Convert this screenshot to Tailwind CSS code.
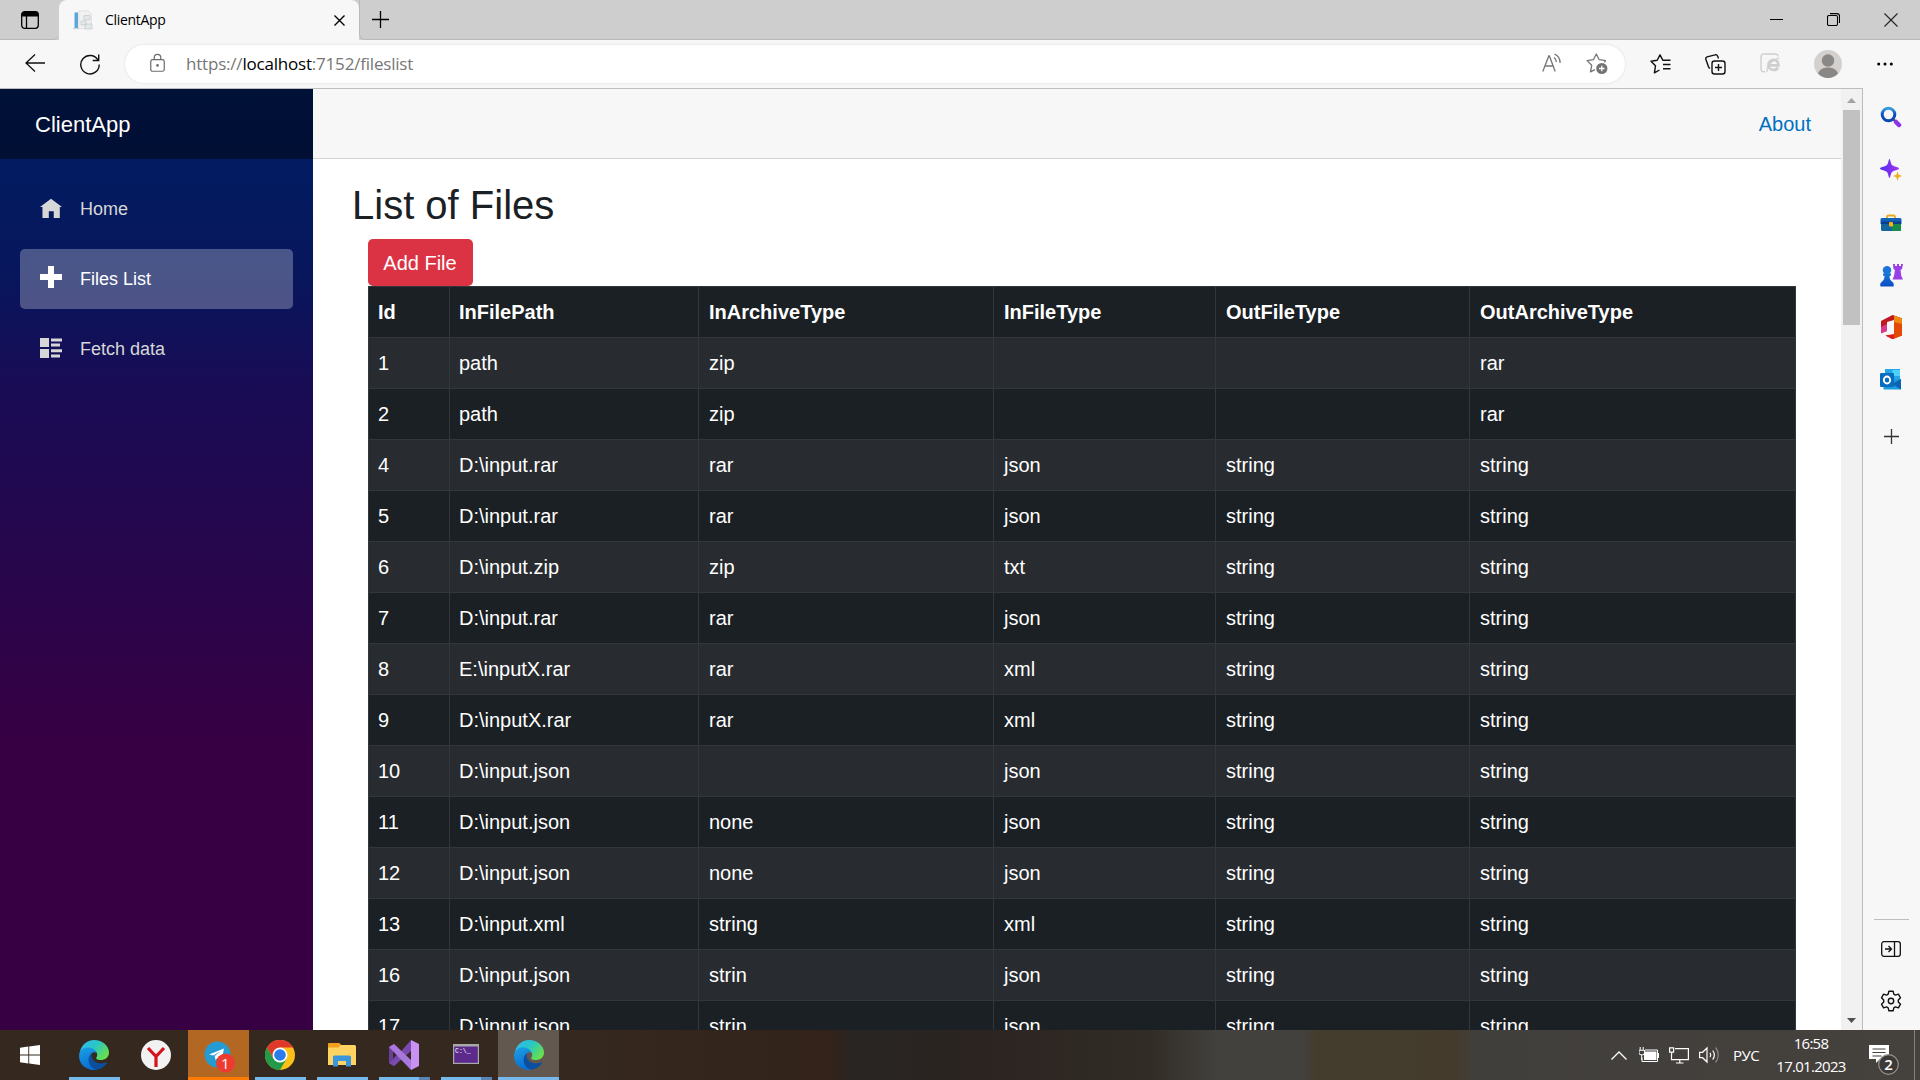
<!DOCTYPE html>
<html lang="en">
<head>
<meta charset="utf-8">
<title>ClientApp</title>
<script src="https://cdn.jsdelivr.net/npm/@tailwindcss/browser@4"></script>
</head>
<body class="w-[1920px] h-[1080px] overflow-hidden flex flex-col bg-[#f7f7f7] font-['Open_Sans',sans-serif] text-black">

<svg class="absolute w-0 h-0">
  <defs>
    <linearGradient id="edgeTop" x1="0" y1="0" x2="1" y2="0.6"><stop offset="0" stop-color="#36b8ee"/><stop offset=".5" stop-color="#27c5c9"/><stop offset="1" stop-color="#66e04e"/></linearGradient>
    <linearGradient id="edgeLeft" x1="0" y1="0" x2=".3" y2="1"><stop offset="0" stop-color="#1ba0e6"/><stop offset="1" stop-color="#0a6fd0"/></linearGradient>
    <linearGradient id="searchRing" x1="0" y1="0" x2="0" y2="1"><stop offset="0" stop-color="#3a9fd8"/><stop offset=".5" stop-color="#0a50c8"/><stop offset="1" stop-color="#0a46b8"/></linearGradient>
    <linearGradient id="spark" x1="0" y1="0" x2="1" y2="0"><stop offset="0" stop-color="#4f2df0"/><stop offset="1" stop-color="#a436f0"/></linearGradient>
    <linearGradient id="pawn" x1="0" y1="0" x2="0" y2="1"><stop offset="0" stop-color="#1976d8"/><stop offset="1" stop-color="#0a4cc4"/></linearGradient>
    <symbol id="edge" viewBox="0 0 30 30">
      <path d="M.8 12.500C2.200 5 8 0 15 0c8.500 0 15 6 15 12.500 0 5-4 7.500-8.500 7.500-3.500 0-5-1.300-4-2.800 1.500-2.200.5-5.200-1.500-6.500C12.500 8.200 5 7.500.8 12.500z" fill="url(#edgeTop)"/>
      <path d="M.1 15.500C.3 10 4.500 7.600 8.500 7.600c4.500 0 8 2 9 5.200C14 11 10.800 14 10.800 18.500c0 5 3.200 9 7.500 11C8 31.800-.4 24.500.1 15.500z" fill="url(#edgeLeft)"/>
      <path d="M13 13.300c-3.500 2.500-4.500 7-2 11.700 2 3.500 5 5 7.500 4.600 4-.8 7.500-3.300 9.500-6.600.3-.6-.1-1-.8-.7-6 2.700-13 .2-14.200-4.800-.4-1.500-.3-3.200 0-4.200z" fill="#0c4f9f"/>
    </symbol>
  </defs>
</svg>

<!-- Tab strip -->
<header class="h-10 shrink-0 flex bg-[#cecece]">
  <div class="w-[59px] flex items-center justify-center border-b border-[#b9b9b9] rounded-br-md">
    <svg class="w-[18px] h-[18px]" viewBox="0 0 18 18" fill="none" stroke="#000"><rect x=".7" y=".7" width="16.600" height="16.600" rx="3" stroke-width="1.300"/><path d="M1 3.500a2.500 2.500 0 0 1 2.500-2.500h11A2.500 2.500 0 0 1 17 3.500V5H1z" fill="#000"/><path d="M5.500 5v12" stroke-width="1.300"/></svg>
  </div>
  <div class="w-[300px] flex items-center bg-[#f7f7f7] rounded-t-lg pl-[14px] pr-[14px]">
    <svg class="w-5 h-5" viewBox="0 0 20 20"><path d="M1.500 2.500h3.500V18H1.500z" fill="#5ba7dc"/><path d="M5.800 1h9.500l3 3v14.500H5.800z" fill="#f1f1f1" stroke="#d8d8d8" stroke-width=".7"/><path d="M11 5.500h6v4.500h-6zM8 11h5v4H8zM12 14h7v5h-7z" fill="#e3e8ea" stroke="#c0c8cc" stroke-width=".7"/><path d="M0 18.700h6" stroke="#c4ccd0"/></svg>
    <span class="ml-3 text-[14px] leading-5 -mt-px tracking-[-0.3px]">ClientApp</span>
    <svg class="ml-auto w-[11px] h-[11px] mt-px" viewBox="0 0 11 11" stroke="#000" stroke-width="1.400"><path d="M.5.5l10 10M10.500.5l-10 10"/></svg>
  </div>
  <div class="flex-1 flex items-center border-b border-l border-[#b9b9b9] rounded-bl-md pl-3">
    <svg class="w-[17px] h-[17px]" viewBox="0 0 17 17" stroke="#000" stroke-width="1.300"><path d="M8.500 0v17M0 8.500h17"/></svg>
    <div class="ml-auto flex items-center gap-[44px] pr-[22px]">
      <svg class="w-[13px] h-[13px]" viewBox="0 0 13 13" stroke="#000"><path d="M0 6.500h13"/></svg>
      <svg class="w-[13px] h-[13px]" viewBox="0 0 13 13" fill="none" stroke="#000" stroke-width="1.100"><rect x=".5" y="2.500" width="10" height="10" rx="1.500"/><path d="M3 .6h7a2.500 2.500 0 0 1 2.500 2.500v7"/></svg>
      <svg class="w-[14px] h-[14px]" viewBox="0 0 14 14" stroke="#222" stroke-width="1.100"><path d="M.5.5l13 13M13.500.5l-13 13"/></svg>
    </div>
  </div>
</header>

<!-- Address toolbar -->
<div class="h-12 shrink-0 flex items-center pl-[25px] pr-[27px]">
  <svg class="w-5 h-[18px] mb-0.5" viewBox="0 0 20 18" fill="none" stroke="#111" stroke-width="1.300"><path d="M20 9H1M10 .5L1 9l9 8.500"/></svg>
  <svg class="ml-[35px] w-5 h-[21px]" viewBox="0 0 20 21" fill="none" stroke="#111" stroke-width="1.400"><path d="M18.200 6.500A9.200 9.200 0 1 0 19.200 10.500M18.700.5v6h-6"/></svg>
  <div class="ml-[25px] w-[1500px] h-[38px] rounded-full bg-white shadow-[0_0_3px_rgba(0,0,0,0.1)] flex items-center pl-[25px] pr-[17px]">
    <svg class="w-[15px] h-[20px] mb-0.5" viewBox="0 0 16 20" fill="none" stroke="#6c6c6c" stroke-width="1.300"><rect x=".8" y="6.500" width="14.400" height="12.300" rx="2"/><path d="M4.500 6.500V4.300a3.500 3.500 0 0 1 7 0v2.200"/><circle cx="8" cy="12.600" r=".8" fill="#6c6c6c"/></svg>
    <span class="ml-[21px] text-[17px] leading-6 text-[#767676] tracking-[-0.2px] whitespace-nowrap">https://<span class="text-black">localhost</span>:7152/fileslist</span>
    <svg class="ml-auto w-5 h-5 mb-0.5" viewBox="0 0 20 20" fill="none" stroke="#767676" stroke-width="1.300"><path d="M.8 18.500L6.800 3h.6l5.800 15.500M3 13h8M12 4.500c1.500 1 2.300 2.600 2.300 4.500M12.500 1.200c3.200 1.300 5.600 4.600 5.600 8.800"/></svg>
    <svg class="ml-[24px] w-[22px] h-[22px]" viewBox="0 0 22 22"><path d="M19.800 7.600l-6.600-.9L10.300 1 7.400 6.700l-6.300.9 4.600 4.700L4.500 18.800l4.500-2.200M19.800 7.600l-1.600 1.800" fill="none" stroke="#767676" stroke-width="1.300" stroke-linejoin="round"/><circle cx="15.800" cy="15.500" r="5.600" fill="#737373"/><path d="M15.800 12.700v5.600M13 15.500h5.600" stroke="#fff" stroke-width="1.300"/></svg>
  </div>
  <svg class="ml-[25px] w-[21px] h-5" viewBox="0 0 21 20" fill="none" stroke="#111" stroke-width="1.400" stroke-linejoin="round"><path d="M13.500 6.200L12.800 6.100 10 .9 7.200 6.300 1 7.200l4.500 4.600L4.400 18.800 9.500 16M12.500 6.300h8M13 10.500H20.500M13 14.800h7.500"/></svg>
  <svg class="ml-[34px] w-[21px] h-[21px]" viewBox="0 0 21 21" fill="none" stroke="#111" stroke-width="1.400"><rect x="7" y="7" width="13" height="13" rx="2.500"/><path d="M13.500 10v7M10 13.500h7M5 14.500a3 3 0 0 1-1.500-1.800L.9 5.500a2 2 0 0 1 1.300-2.600L10 .9a2 2 0 0 1 2.600 1.200l.9 2.300"/></svg>
  <svg class="ml-[34px] w-5 h-5 mb-0.5" viewBox="0 0 20 20" fill="none" stroke="#cfcfcf"><path d="M5 18.700H3.500A2.500 2.500 0 0 1 1 16.200V3.500A2.500 2.500 0 0 1 3.500 1h12A2.500 2.500 0 0 1 18 3.500" stroke-width="1.400"/><path d="M8.500 12.400h10c.1-3.600-2-5.600-5-5.600s-5 2.300-5 5.200 2 5 5 5c2 0 3.500-.8 4.400-2.500" stroke-width="2.700"/><path d="M7.500 19c-2.500-3 4.500-13 12-14" stroke-width="1.200"/></svg>
  <svg class="ml-[34px] w-7 h-7" viewBox="0 0 28 28"><circle cx="14" cy="14" r="14" fill="#d3d0ce"/><circle cx="14" cy="10.500" r="6.200" fill="#8a8886"/><path d="M4 23.500c1.500-4 5-6 10-6s8.500 2 10 6A14 14 0 0 1 14 28a14 14 0 0 1-10-4.500z" fill="#8a8886"/></svg>
  <svg class="ml-auto w-4 h-1" viewBox="0 0 16 4" fill="#000"><circle cx="1.700" cy="2" r="1.500"/><circle cx="8" cy="2" r="1.500"/><circle cx="14.300" cy="2" r="1.500"/></svg>
</div>

<!-- Page and side panel -->
<div class="h-[942px] shrink-0 flex">
  <div class="w-[1863px] flex border-t border-r border-[#bdbdbd] bg-white font-['Liberation_Sans',Arial,sans-serif]">
    <nav class="w-[313px] shrink-0 h-full bg-linear-[180deg,#001f66_0%,#021c61_7.400%,#08165c_20%,#190c55_32%,#370043_70%]">
      <div class="h-[70px] flex items-center pl-[35px] bg-black/45 text-white text-[22px]">ClientApp</div>
      <div class="flex flex-col gap-[10px] pt-5 px-5 text-[18px] text-[#d7d7d7]">
        <div class="h-[60px] flex items-center pl-5 gap-[18px]">
          <svg class="w-[22px] h-[22px] -mt-0.5" viewBox="0 0 8 8" fill="currentColor"><path d="M4 .6L0 3.600h.9v4H3.200V5.200h1.800v2.400h2.200v-4H8z"/></svg>Home</div>
        <div class="h-[60px] flex items-center pl-5 gap-[18px] rounded-[5px] bg-[#ffffff]/27 text-white">
          <svg class="w-[22px] h-[22px] -mt-1" viewBox="0 0 22 22" fill="currentColor"><path d="M8 0h6v8h8v6h-8v8H8v-8H0V8h8z"/></svg>Files List</div>
        <div class="h-[60px] flex items-center pl-5 gap-[18px]">
          <svg class="w-[22px] h-[20px] -mt-0.5" viewBox="0 0 22 20" fill="currentColor"><path d="M0 0h9v9H0zM11 .500h11v3H11zM11 5.500h9v3h-9zM0 11h9v9H0zM11 11.300h11v3H11zM11 16.500h9v3h-9z"/></svg>Fetch data</div>
      </div>
    </nav>
    <main class="flex-1 min-w-0 flex flex-col overflow-hidden">
      <div class="h-[70px] shrink-0 flex items-center justify-end pr-[30px] bg-[#f7f7f7] border-b border-[#d3d3d3] text-[20px] text-[#0071c1]">About</div>
      <article class="pt-[22px] pl-[39px] pr-[45px] text-[20px] leading-[30px]">
        <h2 class="text-[40px] leading-[48px] mb-[10px] text-[#1b2024]">List of Files</h2>
        <div class="pl-4">
          <button class="block w-[105px] h-[47px] rounded-[5px] bg-[#dc3344] text-white text-center pr-px">Add File</button>
          <table class="w-[1428px] table-fixed border-separate border-spacing-0 border-r border-[#32373b] text-white text-left">
            <colgroup><col class="w-[81px]"><col class="w-[249px]"><col class="w-[295px]"><col class="w-[222px]"><col class="w-[254px]"><col class="w-[326px]"></colgroup>
            <tbody id="rows"></tbody>
          </table>
        </div>
      </article>
    </main>
    <div class="w-[21px] shrink-0 flex flex-col items-center bg-[#f1f1f1] pt-[9px] pb-[7px]">
      <svg class="w-[9px] h-[5px]" viewBox="0 0 9 5"><path d="M0 5L4.500 0 9 5z" fill="#a3a3a3"/></svg>
      <div class="mt-[7px] w-[17px] h-[215px] bg-[#c1c1c1]"></div>
      <svg class="mt-auto w-[9px] h-[5px]" viewBox="0 0 9 5"><path d="M0 0h9L4.500 5z" fill="#505050"/></svg>
    </div>
  </div>

  <aside class="flex-1 flex flex-col items-center pt-[2px] pr-px bg-[#f7f7f7]">
    <div class="h-[53px] flex items-center"><svg class="w-[22px] h-[22px]" viewBox="0 0 22 22" fill="none"><circle cx="8.500" cy="8.500" r="6.300" stroke="url(#searchRing)" stroke-width="3"/><path d="M13 13l3 3" stroke="#444" stroke-width="2"/><path d="M16 16l3 3" stroke="#8a35e8" stroke-width="4.500" stroke-linecap="round"/></svg></div>
    <div class="h-[53px] flex items-center"><svg class="w-[22px] h-[22px]" viewBox="0 0 22 22"><path d="M9.500 0c.8 0 1.200 4.500 2.500 6 1.500 1.500 7 2.200 7 3.500s-5.500 2-7 3.500c-1.300 1.500-1.700 6-2.500 6s-1.200-4.500-2.500-6C5.500 11.500 0 10.800 0 9.500S5.500 7.500 7 6C8.300 4.500 8.700 0 9.500 0z" fill="url(#spark)"/><path d="M17.500 12.500l1.200 3.300 3.300 1.200-3.300 1.200-1.200 3.800-1.200-3.800L13 17l3.300-1.200z" fill="#f0ae1a"/></svg></div>
    <div class="h-[53px] flex items-center"><svg class="w-[22px] h-[18px]" viewBox="0 0 22 18"><path d="M7 5V3a1.500 1.500 0 0 1 1.500-1.500h5A1.500 1.500 0 0 1 15 3v2" fill="none" stroke="#eaa81e" stroke-width="1.800"/><path d="M1 9h20v6.500A1.500 1.500 0 0 1 19.500 17h-17A1.500 1.500 0 0 1 1 15.500z" fill="#13669c"/><path d="M12 9h9v6.500a1.500 1.500 0 0 1-1.500 1.500H12z" fill="#188a4c"/><path d="M2 4h18a1.500 1.500 0 0 1 1.500 1.500V10H.5V5.500A1.500 1.500 0 0 1 2 4z" fill="#1263b8"/><path d="M1 7.500h20V10H1z" fill="#0b3f91"/><rect x="9" y="8" width="4" height="4.500" rx="1" fill="#fbb415"/></svg></div>
    <div class="h-[52px] flex items-center"><svg class="w-[24px] h-[24px]" viewBox="0 0 24 24"><path d="M14 1h2v2h2V1h2v2h2V1h2l-1 5-1.500 1 .8 6 1.700 3.500H13.500l1.500-3.500 1-6-1.500-1z" fill="#9a3fe8"/><circle cx="8" cy="7.200" r="4.200" fill="#1976d8"/><path d="M4 10.500h8v2l-1.500.5c0 3 .8 4.500 3 6 1.500 1.200 1.500 3 1 4.500H1.500c-.5-1.500-.5-3.300 1-4.500 2.200-1.500 3-3 3-6L4 12.500z" fill="url(#pawn)"/></svg></div>
    <div class="h-[52px] flex items-center"><svg class="w-[21px] h-[24px]" viewBox="0 0 21 24"><path d="M0 6L11.500 0 21 3.500v17L11.500 24l-7-3.500L13 20V5L6 7v9l-6 2z" fill="#c01820"/><path d="M13 .5l8 3v17l-8 3.300z" fill="#e24a06"/><path d="M13 .5l8 3V9l-8-2z" fill="#ee8a10"/><path d="M0 12l6-3v7l-6 2.500z" fill="#d83a8e"/><path d="M4.500 20.500L13 19v5h-2z" fill="#e01c1c"/></svg></div>
    <div class="h-[53px] flex items-center"><svg class="w-[22px] h-[21px]" viewBox="0 0 22 21"><path d="M5 0h15v12H5z" fill="#22a6e8"/><path d="M12.500 1H20v6h-7.500z" fill="#4fd0fa"/><path d="M3.500 10H21v10.500H3.500z" fill="#1a9de0"/><path d="M12 15l9-5v10.500z" fill="#0c63b4"/><rect y="4" width="14" height="14" rx="1.200" fill="#0a6cbf"/><ellipse cx="7" cy="11" rx="3.200" ry="3.500" fill="none" stroke="#fff" stroke-width="1.900"/></svg></div>
    <div class="h-[60px] flex items-center"><svg class="w-[15px] h-[15px]" viewBox="0 0 15 15" stroke="#333" stroke-width="1.300"><path d="M7.500 0v15M0 7.500h15"/></svg></div>
    <div class="mt-auto w-[35px] h-px bg-[#bdbdbd]"></div>
    <svg class="mt-[21px] w-[20px] h-4" viewBox="0 0 20 16" fill="none" stroke="#111" stroke-width="1.300"><rect x=".7" y=".7" width="18.600" height="14.600" rx="2.200"/><path d="M13.500 1v14M4 8h6.500M7.500 5l3 3-3 3"/></svg>
    <svg class="mt-[33px] mb-[18px] w-[22px] h-[22px]" viewBox="0 0 22 22" fill="none" stroke="#111" stroke-width="1.400" stroke-linejoin="round"><circle cx="11" cy="11" r="2.700"/><path d="M8.900 1.200h4.200l.7 3 1.600.9 3-.9 2.100 3.600-2.200 2.200v2l2.200 2.200-2.100 3.600-3-.9-1.600.9-.7 3H8.900l-.7-3-1.600-.9-3 .9-2.100-3.600L3.700 12v-2L1.500 7.800l2.100-3.600 3 .9 1.600-.9z"/></svg>
  </aside>
</div>

<!-- Windows taskbar -->
<footer class="h-[50px] shrink-0 flex items-stretch text-white bg-linear-[90deg,#35291f_0px,#35281f_580px,#33231a_832px,#282522_852px,#2b2421_978px,#322c26_1150px,#42413d_1217px,#42413d_1303px,#443d2e_1316px,#443b2c_1455px,#413f3c_1475px,#45413d_1920px]">
  <div class="w-[63px] flex items-center pl-5"><svg class="w-5 h-5" viewBox="0 0 20 20" fill="#fff"><path d="M0 2.800L8.300 1.600V9.500H0zM9.200 1.500L20 0v9.500H9.200zM0 10.400h8.300v8L0 17.200zM9.200 10.400H20V20L9.200 18.500z"/></svg></div>
  <div class="w-[62px] flex flex-col items-center"><svg class="w-[30px] h-[30px] mt-[10px]"><use href="#edge"/></svg><div class="mt-auto w-[51px] h-[3px] bg-[#76b9ed]"></div></div>
  <div class="w-[62px] flex flex-col items-center"><svg class="w-[30px] h-[30px] mt-[10px]" viewBox="0 0 30 30"><circle cx="15" cy="15" r="15" fill="#f2f2f2"/><path d="M7 8l8 8.500L23 8M15 16v11" fill="none" stroke="#d8121c" stroke-width="3.200"/></svg></div>
  <div class="ml-px w-[61px] flex flex-col items-center bg-[#b26723]"><svg class="w-[34px] h-[34px] mt-[10px]" viewBox="0 0 34 34"><circle cx="15.500" cy="14.500" r="13" fill="#259bd4"/><path d="M7 14.500L22 8.500l-2.500 12-4-2.500-2 2-.8-4 6-4.800-7.500 4.300z" fill="#fff"/><circle cx="23.500" cy="23" r="9.500" fill="#ee3b30"/><text x="23.300" y="28.500" text-anchor="middle" font-size="15" font-family="Open Sans" fill="#fff">1</text></svg><div class="mt-auto w-full h-[3px] bg-[#ff7a00]"></div></div>
  <div class="w-[62px] flex flex-col items-center"><svg class="w-[30px] h-[30px] mt-[10px]" viewBox="0 0 30 30"><circle cx="15" cy="15" r="15" fill="#fbc116"/><path d="M2 7.500A15 15 0 0 1 28 7.500H15L8.500 18.700z" fill="#e0392c"/><path d="M2 7.500A15 15 0 0 0 15 30L21.500 18.700 8.500 18.700z" fill="#229a49"/><circle cx="15" cy="15" r="7.500" fill="#fff"/><circle cx="15" cy="15" r="5.800" fill="#2b7cee"/></svg><div class="mt-auto w-[51px] h-[3px] bg-[#76b9ed]"></div></div>
  <div class="w-[62px] flex flex-col items-center"><svg class="w-[28px] h-[24px] mt-[13px]" viewBox="0 0 28 24"><path d="M0 1.500A1.500 1.500 0 0 1 1.500 0H11l2 2h13.500A1.500 1.500 0 0 1 28 3.500V22H0z" fill="#fdd361"/><path d="M0 1.500A1.500 1.500 0 0 1 1.500 0H11l1.500 2-2 2.500H0z" fill="#f0a01c"/><path d="M5 23.500V14a1.500 1.500 0 0 1 1.500-1.500h15A1.500 1.500 0 0 1 23 14v9.500h-5V18h-8v5.500z" fill="#3a95dc"/></svg><div class="mt-auto w-[51px] h-[3px] bg-[#76b9ed]"></div></div>
  <div class="w-[62px] flex flex-col items-center"><svg class="w-[30px] h-[30px] mt-[10px]" viewBox="0 0 30 30"><path d="M0 7l5-3 4 3.500v15L5 26l-5-3z" fill="#6a3f9c"/><path d="M5 26l17-15V0L5 19.500 0 23z" fill="#7a4aae"/><path d="M5 4L22 20v10L0 7z" fill="#a878dc"/><path d="M22 0l8 4v22l-8 4z" fill="#c892f5"/><path d="M4 11.500l3.500 3.500L4 18.500z" fill="#35291f"/></svg><div class="mt-auto w-[51px] h-[3px] flex bg-[#76b9ed]"><div class="ml-auto w-[11px] bg-[#5a84b4]"></div></div></div>
  <div class="w-[62px] flex flex-col items-center"><svg class="w-[26px] h-[20px] mt-[14px]" viewBox="0 0 26 20"><rect width="26" height="20" fill="#a8a8a8"/><rect x="1.200" y="2.500" width="23.600" height="16.300" fill="#5b2a8c"/><text x="2" y="9" font-size="6.500" font-family="Liberation Mono" fill="#fff">C:\_</text></svg><div class="mt-auto w-[51px] h-[3px] flex bg-[#76b9ed]"><div class="ml-auto w-[11px] bg-[#5a84b4]"></div></div></div>
  <div class="ml-px w-[61px] flex flex-col items-center bg-[#62584f]"><svg class="w-[30px] h-[30px] mt-[10px]"><use href="#edge"/></svg><div class="mt-auto w-full h-[3px] bg-[#76b9ed]"></div></div>

  <div class="ml-auto flex items-center">
    <svg class="w-4 h-[9px]" viewBox="0 0 16 9" fill="none" stroke="#fff" stroke-width="1.300"><path d="M.5 8.500L8 1l7.500 7.500"/></svg>
    <svg class="ml-3 w-5 h-[16px]" viewBox="0 0 20 16"><path d="M5 4.500h12.500V13H5z" fill="#fff"/><path d="M3 10.500V14.500h15.500V3H6M19.500 6v5M1.200 0v3M4.200 0v3M0 3.300h5.500v2.500a2 2 0 0 1-2 2H2a2 2 0 0 1-2-2zM2.700 8v5" fill="none" stroke="#fff"/></svg>
    <svg class="ml-[10px] w-5 h-[17px]" viewBox="0 0 20 17" fill="none" stroke="#fff" stroke-width="1.200"><path d="M6 1.600h13.400v11H2.500V7M10.800 13v3M7 16h7.500M.6.800h4v4.400h-4zM2.600 5v3"/></svg>
    <svg class="ml-[10px] w-[21px] h-[18px]" viewBox="0 0 21 18" fill="none" stroke="#fff" stroke-width="1.200"><path d="M.6 6.300h3L8 2v14l-4.400-4.300h-3zM11 6.800c.9 1.300.9 3.100 0 4.400M13.700 4.500c2 2.700 2 6.300 0 9"/><path d="M16.500 1.500c3.700 4.300 3.700 10.700 0 15" stroke="#8c8986"/></svg>
    <div class="ml-[13px] w-[27px] text-[15px] tracking-[-0.5px]">РУС</div>
    <div class="ml-[15px] w-[72px] text-[15px] leading-[23px] text-center tracking-[-0.7px] whitespace-nowrap">16:58<br>17.01.2023</div>
    <svg class="ml-[21px] w-[32px] h-[32px] mt-2" viewBox="0 0 32 32"><path d="M1 2h20v14H12l-4 4v-4H1z" fill="#fff"/><path d="M4.500 6h13M4.500 9.500h13M4.500 13h9" stroke="#45413d" stroke-width="1.100"/><circle cx="20.500" cy="21.500" r="9.800" fill="#3c3937" stroke="#96938f" stroke-width="1.200"/><text x="20.500" y="27" text-anchor="middle" font-size="15" font-weight="600" font-family="Open Sans" fill="#fff">2</text></svg>
    <div class="ml-[14px] mr-[5px] h-full w-px bg-[#85827e]"></div>
  </div>
</footer>

<script>
const head = ['Id', 'InFilePath', 'InArchiveType', 'InFileType', 'OutFileType', 'OutArchiveType'];
const files = [
  [1, 'path', 'zip', '', '', 'rar'],
  [2, 'path', 'zip', '', '', 'rar'],
  [4, 'D:\\input.rar', 'rar', 'json', 'string', 'string'],
  [5, 'D:\\input.rar', 'rar', 'json', 'string', 'string'],
  [6, 'D:\\input.zip', 'zip', 'txt', 'string', 'string'],
  [7, 'D:\\input.rar', 'rar', 'json', 'string', 'string'],
  [8, 'E:\\inputX.rar', 'rar', 'xml', 'string', 'string'],
  [9, 'D:\\inputX.rar', 'rar', 'xml', 'string', 'string'],
  [10, 'D:\\input.json', '', 'json', 'string', 'string'],
  [11, 'D:\\input.json', 'none', 'json', 'string', 'string'],
  [12, 'D:\\input.json', 'none', 'json', 'string', 'string'],
  [13, 'D:\\input.xml', 'string', 'xml', 'string', 'string'],
  [16, 'D:\\input.json', 'strin', 'json', 'string', 'string'],
  [17, 'D:\\input.json', 'strin', 'json', 'string', 'string'],
];
const cell = 'h-[51px] border-t border-l border-[#32373b] py-[10px] ';
const row = (vals, tag, bg, weight) =>
  `<tr class="${bg}">` + vals.map((v, i) => `<${tag} class="${cell}${weight} ${i < 2 ? 'pl-[9px]' : 'pl-[10px]'}">${v}</${tag}>`).join('') + '</tr>';
document.getElementById('rows').innerHTML =
  row(head, 'th', 'bg-[#1b2024]', 'font-bold') +
  files.map((f, i) => row(f, 'td', i % 2 ? 'bg-[#1b2024]' : 'bg-[#282b30]', 'font-normal')).join('');
</script>
</body>
</html>
